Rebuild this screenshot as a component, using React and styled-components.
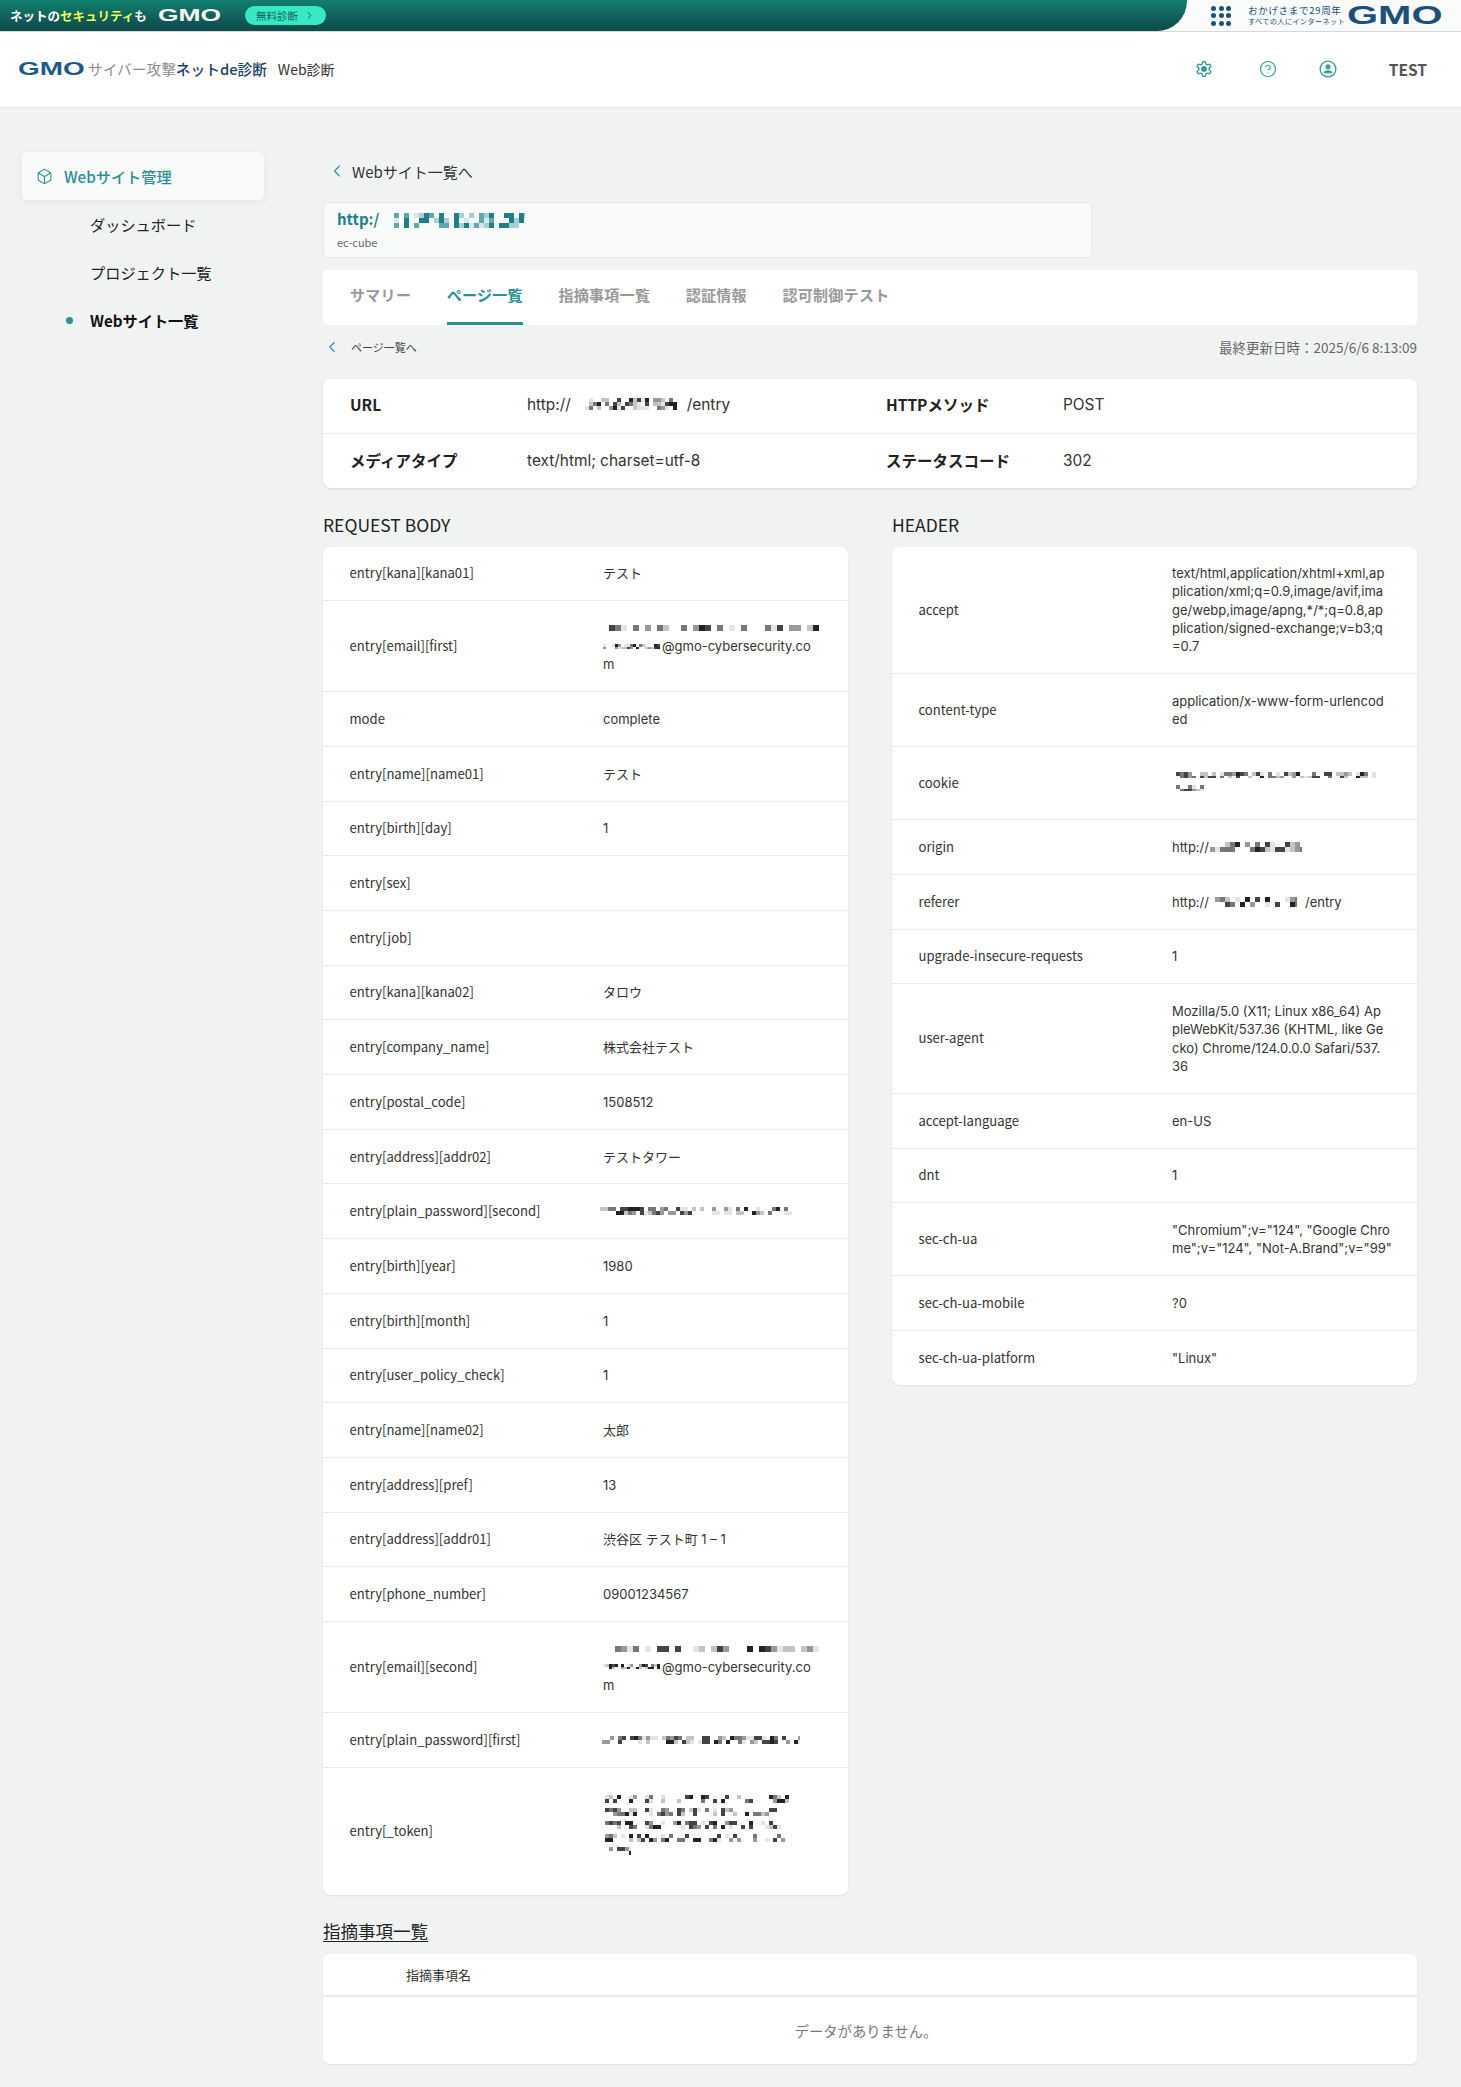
import React from 'react';
import styled, { createGlobalStyle } from 'styled-components';
import { Box, ChevronLeft, ChevronRight, CircleHelp } from 'lucide-react';

const GlobalStyle = createGlobalStyle`
  html, body { margin: 0; padding: 0; background: #f1f3f3; }
  body {
    font-family: "Noto Sans CJK JP", "Noto Sans", sans-serif;
    color: #222;
  }
  * { box-sizing: border-box; }
`;

const TEAL = '#2a8f98';

// TOP BANNER
const Banner = styled.div`
  display: flex;
  height: 32px;
  background: #fafcfc;
  border-bottom: 1px solid #d5d8d8;
`;

const BannerLeft = styled.div`
  flex: 0 0 1187px;
  display: flex;
  align-items: center;
  padding-left: 10px;
  background: linear-gradient(180deg, #12806f 0%, #0e4f4e 85%);
  border-bottom-right-radius: 30px;
`;

const Catch = styled.span`
  width: 148px;
  font-size: 12.5px;
  font-weight: 700;
  color: #fff;
  white-space: nowrap;
  em { font-style: normal; color: #e8ff4d; }
`;

const Wordmark = styled.span`
  display: inline-block;
  width: ${p => p.$width}px;
  font-family: "Liberation Sans", sans-serif;
  font-weight: 700;
  font-size: ${p => p.$size}px;
  line-height: 1;
  color: ${p => p.$color};
  transform: scaleX(${p => p.$scale});
  transform-origin: left center;
  white-space: nowrap;
`;

const FreeCheck = styled.span`
  margin-left: 23px;
  width: 81px;
  height: 19px;
  display: flex;
  align-items: center;
  justify-content: center;
  gap: 6px;
  border-radius: 10px;
  background: #38e8c4;
  color: #17635a;
  font-size: 10.5px;
`;

const BannerRight = styled.div`
  flex: 1;
  display: flex;
  align-items: center;
  padding-left: 24px;
`;

const Dots = styled.div`
  display: grid;
  grid-template-columns: repeat(3, 5px);
  gap: 2.5px;
  margin-right: 17px;
  span { width: 5px; height: 5px; border-radius: 50%; background: #1c4f7c; }
`;

const Slogan = styled.div`
  width: 99px;
  display: flex;
  flex-direction: column;
  color: #1c4f7c;
  line-height: 1;
  white-space: nowrap;
  b { font-weight: 400; font-size: 9.5px; letter-spacing: .7px; margin-bottom: 2px; }
  small { font-size: 7.2px; letter-spacing: .35px; }
`;

// HEADER
const Header = styled.header`
  height: 76px;
  display: flex;
  align-items: center;
  padding: 0 0 2px 18px;
  background: #fff;
  border-bottom: 1px solid #e2e5e5;
`;

const ServiceGrey = styled.span`
  margin-left: 3px;
  font-size: 14.7px;
  color: #8a8d90;
  white-space: nowrap;
`;

const ServiceNavy = styled.span`
  font-size: 14.7px;
  font-weight: 500;
  color: #1d4266;
  white-space: nowrap;
`;

const ServiceName = styled.span`
  margin-left: 11px;
  font-size: 14px;
  color: #333;
  white-space: nowrap;
`;

const HeaderRight = styled.div`
  margin-left: auto;
  display: flex;
  align-items: center;
  padding-right: 34px;
`;

const HeaderIcon = styled.span`
  display: flex;
  width: 18px;
  height: 18px;
  margin-right: ${p => p.$gap}px;
  color: #3a9a9e;
`;

const UserName = styled.span`
  font-size: 15.5px;
  font-weight: 700;
  color: #555;
`;

// PAGE
const Layout = styled.div`
  display: flex;
  align-items: flex-start;
  padding-bottom: 22px;
`;

const Sidebar = styled.nav`
  flex: 0 0 323px;
  padding: 44px 59px 0 22px;
`;

const SideHead = styled.div`
  height: 48px;
  display: flex;
  align-items: center;
  gap: 11px;
  padding-left: 14px;
  background: #f9fbfb;
  border-radius: 5px;
  box-shadow: 0 2px 8px rgba(0, 0, 0, .06);
  color: ${TEAL};
  font-size: 15.2px;
  font-weight: 500;
`;

const SideItem = styled.div`
  position: relative;
  height: 48px;
  display: flex;
  align-items: center;
  padding: 0 0 1px 68px;
  font-size: 15.2px;
  font-weight: ${p => (p.$active ? 700 : 400)};
  color: ${p => (p.$active ? '#111' : '#222')};
  ${p => p.$active && `
    &::before {
      content: '';
      position: absolute;
      left: 44px;
      top: 21px;
      width: 7px;
      height: 7px;
      border-radius: 50%;
      background: ${TEAL};
    }
  `}
`;

const Main = styled.main`
  width: 1094px;
  padding-top: 53px;
`;

const BackLink = styled.div`
  height: 20px;
  margin-bottom: 1px;
  display: flex;
  align-items: center;
  gap: 5px;
  padding-left: 4px;
  font-size: 15px;
  color: #333;
  svg { color: ${TEAL}; }
`;

const TargetCard = styled.div`
  width: 769px;
  height: 56px;
  margin-top: 21px;
  padding: 3px 13px 0;
  background: #f9fbfb;
  border: 1px solid #e6e9e9;
  border-radius: 5px;
`;

const TargetUrl = styled.div`
  height: 25px;
  display: flex;
  align-items: center;
  gap: 15px;
  font-size: 15px;
  font-weight: 700;
  color: #1d7f8a;
`;

const TargetName = styled.div`
  margin-top: 3px;
  font-size: 11px;
  line-height: 16px;
  color: #666;
`;

const Tabs = styled.div`
  height: 55px;
  margin-top: 12px;
  display: flex;
  gap: 35.5px;
  padding-left: 27px;
  background: #fff;
  border-radius: 4px;
`;

const Tab = styled.div`
  display: flex;
  align-items: center;
  padding-bottom: 3px;
  font-size: 15px;
  letter-spacing: .3px;
  font-weight: 700;
  color: ${p => (p.$active ? TEAL : '#999')};
  border-bottom: 3px solid ${p => (p.$active ? TEAL : 'transparent')};
`;

const SubRow = styled.div`
  height: 20px;
  margin-top: 12px;
  display: flex;
  align-items: center;
  justify-content: space-between;
`;

const SubBack = styled.div`
  display: flex;
  align-items: center;
  gap: 10px;
  font-size: 11px;
  color: #444;
  svg { color: ${TEAL}; }
`;

const Updated = styled.div`
  padding-bottom: 1px;
  font-size: 13.5px;
  color: #666;
`;

const InfoCard = styled.div`
  margin-top: 22px;
  background: #fff;
  border-radius: 8px;
  box-shadow: 0 1px 3px rgba(0, 0, 0, .1);
`;

const InfoRow = styled.div`
  height: 53.5px;
  display: grid;
  grid-template-columns: 176px 360px 176px 1fr;
  align-items: center;
  padding: 0 0 3px 27px;
  & + & { border-top: 1px solid #e6e8e8; height: 55px; padding-bottom: 1px; }
`;

const InfoLabel = styled.div`
  font-size: 15.5px;
  font-weight: 700;
  color: #222;
`;

const InfoValue = styled.div`
  display: flex;
  align-items: center;
  padding-left: 1px;
  font-family: Inter, "Noto Sans CJK JP", sans-serif;
  font-size: 15.4px;
  color: #333;
`;

const Columns = styled.div`
  display: grid;
  grid-template-columns: 525px 525px;
  gap: 44px;
  align-items: start;
  margin-top: 25px;
`;

const ColumnTitle = styled.h2`
  margin: 0 0 10px;
  font-size: 17.5px;
  font-weight: 400;
  line-height: 24px;
  color: #222;
`;

const KvTable = styled.div`
  background: #fff;
  border-radius: 8px;
  box-shadow: 0 1px 2px rgba(0, 0, 0, .08);
`;

const KvRow = styled.div`
  display: grid;
  grid-template-columns: 280px 1fr;
  align-items: center;
  padding: 17.7px 16px 17.7px 0;
  & + & { border-top: 1px solid #e6e8e8; }
`;

const KvLabel = styled.div`
  padding-left: 26.5px;
  font-size: 13.1px;
  line-height: 18.3px;
  color: #333;
`;

const KvValue = styled.div`
  font-family: Inter, "Noto Sans CJK JP", sans-serif;
  font-size: 13px;
  line-height: 18.3px;
  color: #333;
  white-space: pre-line;
`;

const Inline = styled.div`
  display: flex;
  align-items: center;
  white-space: nowrap;
`;

const Pixels = styled.svg`
  display: block;
  flex: none;
  margin: ${p => p.$top || 0}px ${p => p.$right || 0}px ${p => p.$bottom || 0}px ${p => p.$left || 0}px;
`;

const TokenLines = styled.div`
  height: 92px;
  padding-top: 10px;
  display: flex;
  flex-direction: column;
  gap: 5px;
`;

const IssueTitle = styled.h2`
  margin: 24px 0 0;
  font-size: 17.5px;
  font-weight: 400;
  line-height: 24px;
  color: #222;
  text-decoration: underline;
  text-underline-offset: 3px;
`;

const IssueCard = styled.div`
  margin-top: 11px;
  background: #fff;
  border-radius: 6px;
  box-shadow: 0 1px 2px rgba(0, 0, 0, .08);
`;

const IssueHead = styled.div`
  height: 43px;
  display: flex;
  align-items: center;
  padding-left: 83px;
  font-size: 13px;
  color: #333;
  border-bottom: 2px solid #e8eaea;
`;

const EmptyText = styled.div`
  height: 67px;
  display: flex;
  align-items: center;
  justify-content: center;
  padding-right: 8px;
  font-size: 14.3px;
  color: #777;
`;

// redacted text in the screenshot, a small seeded pixel block
const Mosaic = ({ w, h, cell = 5, seed = 1, teal, blank = 0.38, left, right, top, bottom }) => {
  let s = seed * 7919;
  const next = () => {
    s = (s * 16807) % 2147483647;
    return (s % 1000) / 1000;
  };
  const shades = teal
    ? ['#1d7f8a', '#1d7f8a', '#5fa8ae', '#a8cfd2', '#d6e8e9']
    : ['#222', '#444', '#777', '#999', '#c4c4c4', '#e4e4e4'];
  const rects = [];
  for (let y = 0; y < h; y += cell) {
    for (let x = 0; x < w; x += cell) {
      if (next() < blank) continue;
      rects.push(<rect key={`${x}-${y}`} x={x} y={y} width={cell} height={cell} fill={shades[Math.floor(next() * shades.length)]} />);
    }
  }
  return <Pixels width={w} height={h} $left={left} $right={right} $top={top} $bottom={bottom}>{rects}</Pixels>;
};

const GearIcon = () => (
  <svg width="18" height="18" viewBox="0 0 24 24" fill="none" stroke="currentColor" strokeWidth="2" strokeLinejoin="round">
    <path d="M12.22 2h-.44a2 2 0 0 0-2 2v.18a2 2 0 0 1-1 1.73l-.43.25a2 2 0 0 1-2 0l-.15-.08a2 2 0 0 0-2.73.73l-.22.38a2 2 0 0 0 .73 2.73l.15.1a2 2 0 0 1 1 1.72v.51a2 2 0 0 1-1 1.74l-.15.09a2 2 0 0 0-.73 2.73l.22.38a2 2 0 0 0 2.73.73l.15-.08a2 2 0 0 1 2 0l.43.25a2 2 0 0 1 1 1.73V20a2 2 0 0 0 2 2h.44a2 2 0 0 0 2-2v-.18a2 2 0 0 1 1-1.73l.43-.25a2 2 0 0 1 2 0l.15.08a2 2 0 0 0 2.73-.73l.22-.39a2 2 0 0 0-.73-2.73l-.15-.08a2 2 0 0 1-1-1.74v-.5a2 2 0 0 1 1-1.74l.15-.09a2 2 0 0 0 .73-2.73l-.22-.38a2 2 0 0 0-2.73-.73l-.15.08a2 2 0 0 1-2 0l-.43-.25a2 2 0 0 1-1-1.73V4a2 2 0 0 0-2-2z" />
    <circle cx="12" cy="12" r="4" fill="currentColor" stroke="none" />
  </svg>
);

const UserIcon = () => (
  <svg width="18" height="18" viewBox="0 0 24 24" fill="none" stroke="currentColor" strokeWidth="1.8">
    <circle cx="12" cy="12" r="10.5" />
    <circle cx="12" cy="9" r="3.4" fill="currentColor" stroke="none" />
    <path d="M6 17.5c0-2.6 2.6-3.8 6-3.8s6 1.2 6 3.8z" fill="currentColor" stroke="none" />
  </svg>
);

const EmailValue = ({ seed }) => (
  <>
    <Mosaic w={210} h={6} cell={6} seed={seed} left={6} top={6} bottom={6.3} />
    <Inline>
      <Mosaic w={57} h={5} cell={3} seed={seed + 1} right={2} />
      @gmo-cybersecurity.co
    </Inline>
    m
  </>
);

const TokenValue = () => (
  <TokenLines>
    {[188, 172, 176, 180, 26].map((w, i) => (
      <Mosaic key={i} w={w} h={8} cell={4} seed={23 + i * 6} blank={0.5} left={2} />
    ))}
  </TokenLines>
);

const bodyRows = [
  ['entry[kana][kana01]', 'テスト'],
  ['entry[email][first]', <EmailValue seed={3} />],
  ['mode', 'complete'],
  ['entry[name][name01]', 'テスト'],
  ['entry[birth][day]', '1'],
  ['entry[sex]', ''],
  ['entry[job]', ''],
  ['entry[kana][kana02]', 'タロウ'],
  ['entry[company_name]', '株式会社テスト'],
  ['entry[postal_code]', '1508512'],
  ['entry[address][addr02]', 'テストタワー'],
  ['entry[plain_password][second]', <Mosaic w={200} h={8} cell={4} seed={11} left={-3} top={5} bottom={5.3} />],
  ['entry[birth][year]', '1980'],
  ['entry[birth][month]', '1'],
  ['entry[user_policy_check]', '1'],
  ['entry[name][name02]', '太郎'],
  ['entry[address][pref]', '13'],
  ['entry[address][addr01]', '渋谷区 テスト町 1 – 1'],
  ['entry[phone_number]', '09001234567'],
  ['entry[email][second]', <EmailValue seed={5} />],
  ['entry[plain_password][first]', <Mosaic w={198} h={8} cell={4} seed={17} left={-1} top={5} bottom={5.3} />],
  ['entry[_token]', <TokenValue />],
];

const headerRows = [
  ['accept', 'text/html,application/xhtml+xml,ap\nplication/xml;q=0.9,image/avif,ima\nge/webp,image/apng,*/*;q=0.8,ap\nplication/signed-exchange;v=b3;q\n=0.7'],
  ['content-type', 'application/x-www-form-urlencod\ned'],
  ['cookie', <><Mosaic w={200} h={6} cell={4} seed={29} left={4} top={7} /><Mosaic w={28} h={6} cell={4} seed={31} left={4} top={7} bottom={10.6} /></>],
  ['origin', <Inline>http://<Mosaic w={92} h={10} cell={5} seed={37} left={1} /></Inline>],
  ['referer', <Inline>http://<Mosaic w={82} h={10} cell={5} seed={41} left={6} right={8} />/entry</Inline>],
  ['upgrade-insecure-requests', '1'],
  ['user-agent', 'Mozilla/5.0 (X11; Linux x86_64) Ap\npleWebKit/537.36 (KHTML, like Ge\ncko) Chrome/124.0.0.0 Safari/537.\n36'],
  ['accept-language', 'en-US'],
  ['dnt', '1'],
  ['sec-ch-ua', '"Chromium";v="124", "Google Chro\nme";v="124", "Not-A.Brand";v="99"'],
  ['sec-ch-ua-mobile', '?0'],
  ['sec-ch-ua-platform', '"Linux"'],
];

const tabs = ['サマリー', 'ページ一覧', '指摘事項一覧', '認証情報', '認可制御テスト'];

export default function App() {
  return (
    <>
      <GlobalStyle />
      <Banner>
        <BannerLeft>
          <Catch>ネットの<em>セキュリティ</em>も</Catch>
          <Wordmark $width={64} $size={17} $scale={1.55} $color="#fff">GMO</Wordmark>
          <FreeCheck>無料診断<ChevronRight size={11} /></FreeCheck>
        </BannerLeft>
        <BannerRight>
          <Dots>{Array.from({ length: 9 }, (_, i) => <span key={i} />)}</Dots>
          <Slogan>
            <b>おかげさまで29周年</b>
            <small>すべての人にインターネット</small>
          </Slogan>
          <Wordmark $width={96} $size={25} $scale={1.6} $color="#1c4f7c">GMO</Wordmark>
        </BannerRight>
      </Banner>

      <Header>
        <Wordmark $width={67} $size={18} $scale={1.55} $color="#1c5a8c">GMO</Wordmark>
        <ServiceGrey>サイバー攻撃</ServiceGrey>
        <ServiceNavy>ネットde診断</ServiceNavy>
        <ServiceName>Web診断</ServiceName>
        <HeaderRight>
          <HeaderIcon $gap={46}><GearIcon /></HeaderIcon>
          <HeaderIcon $gap={42}><CircleHelp size={18} strokeWidth={1.6} /></HeaderIcon>
          <HeaderIcon $gap={52}><UserIcon /></HeaderIcon>
          <UserName>TEST</UserName>
        </HeaderRight>
      </Header>

      <Layout>
        <Sidebar>
          <SideHead><Box size={17} strokeWidth={1.5} />Webサイト管理</SideHead>
          <SideItem>ダッシュボード</SideItem>
          <SideItem>プロジェクト一覧</SideItem>
          <SideItem $active>Webサイト一覧</SideItem>
        </Sidebar>

        <Main>
          <BackLink><ChevronLeft size={20} strokeWidth={1.3} />Webサイト一覧へ</BackLink>

          <TargetCard>
            <TargetUrl>http:/<Mosaic w={131} h={15} cell={5} seed={7} teal top={3} /></TargetUrl>
            <TargetName>ec-cube</TargetName>
          </TargetCard>

          <Tabs>
            {tabs.map((t, i) => <Tab key={t} $active={i === 1}>{t}</Tab>)}
          </Tabs>

          <SubRow>
            <SubBack><ChevronLeft size={18} strokeWidth={1.5} />ページ一覧へ</SubBack>
            <Updated>最終更新日時：2025/6/6 8:13:09</Updated>
          </SubRow>

          <InfoCard>
            <InfoRow>
              <InfoLabel>URL</InfoLabel>
              <InfoValue>http://<Mosaic w={96} h={12} cell={4} seed={13} left={14} right={6} />/entry</InfoValue>
              <InfoLabel>HTTPメソッド</InfoLabel>
              <InfoValue>POST</InfoValue>
            </InfoRow>
            <InfoRow>
              <InfoLabel>メディアタイプ</InfoLabel>
              <InfoValue>text/html; charset=utf-8</InfoValue>
              <InfoLabel>ステータスコード</InfoLabel>
              <InfoValue>302</InfoValue>
            </InfoRow>
          </InfoCard>

          <Columns>
            <div>
              <ColumnTitle>REQUEST BODY</ColumnTitle>
              <KvTable>
                {bodyRows.map(([k, v]) => (
                  <KvRow key={k}><KvLabel>{k}</KvLabel><KvValue>{v || '\u00a0'}</KvValue></KvRow>
                ))}
              </KvTable>
            </div>
            <div>
              <ColumnTitle>HEADER</ColumnTitle>
              <KvTable>
                {headerRows.map(([k, v]) => (
                  <KvRow key={k}><KvLabel>{k}</KvLabel><KvValue>{v}</KvValue></KvRow>
                ))}
              </KvTable>
            </div>
          </Columns>

          <IssueTitle>指摘事項一覧</IssueTitle>
          <IssueCard>
            <IssueHead>指摘事項名</IssueHead>
            <EmptyText>データがありません。</EmptyText>
          </IssueCard>
        </Main>
      </Layout>
    </>
  );
}
